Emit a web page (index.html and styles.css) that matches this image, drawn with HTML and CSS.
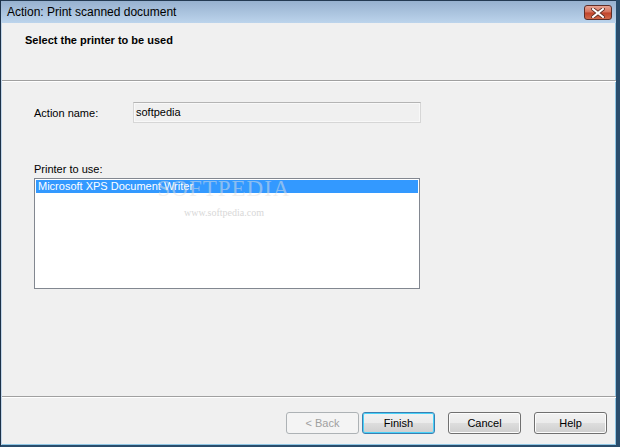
FILE: index.html
```html
<!DOCTYPE html>
<html lang="en">
<head>
  <meta charset="UTF-8">
  <title>Action: Print scanned document</title>
  <link rel="stylesheet" href="styles.css">
</head>
<body>
  <div class="window">
    <div class="titlebar">
      <span class="title">Action: Print scanned document</span>
      <button class="close" type="button" aria-label="Close">
        <svg width="14" height="10" viewBox="0 0 14 10">
          <path d="M2 1 L12 9 M12 1 L2 9" stroke="#5a2a22" stroke-width="3.6" stroke-linecap="square"/>
          <path d="M2 1 L12 9 M12 1 L2 9" stroke="#ffffff" stroke-width="2" stroke-linecap="square"/>
        </svg>
      </button>
    </div>

    <div class="header">
      <h1>Select the printer to be used</h1>
    </div>
    <div class="separator"></div>

    <div class="content">
      <div class="row">
        <label for="actionName">Action name:</label>
        <div class="textbox" id="actionName">softpedia</div>
      </div>

      <label class="list-label">Printer to use:</label>
      <div class="listbox">
        <div class="item selected">Microsoft XPS Document Writer</div>
        <div class="watermark">
          <span class="wm-big">SOFTPEDIA</span>
          <span class="wm-small">www.softpedia.com</span>
        </div>
      </div>
    </div>

    <div class="separator"></div>
    <div class="footer">
      <button class="btn" type="button" disabled>&lt; Back</button>
      <button class="btn focused" type="button">Finish</button>
      <button class="btn gap" type="button">Cancel</button>
      <button class="btn gap" type="button">Help</button>
    </div>
  </div>
</body>
</html>
```

FILE: styles.css
```css
body {
  margin: 0;
  padding: 0;
  background: #f0f0f0;
  font-family: 'Liberation Sans', Arial, sans-serif;
  font-size: 11px;
  color: #000;
}
.window {
  width: 620px;
  height: 447px;
  box-sizing: border-box;
  display: flex;
  flex-direction: column;
  background-color: #f0f0f0;
  border-left: 1px solid #1c3148;
  border-right: 4px solid #2a4d6c;
  border-bottom: 2px solid #2a4d6c;
  box-shadow: inset 1px 0 0 #c2d6ea, inset -1px 0 0 #8fc6e4, inset 0 -1px 0 #8fc6e4;
}
.titlebar {
  height: 23px;
  flex: none;
  box-sizing: border-box;
  border-top: 1px solid #243a52;
  background: linear-gradient(#97b1cf, #bcd4ec);
  display: flex;
  align-items: center;
  padding: 0 4px 0 6px;
}
.title {
  font-size: 12px;
  color: #000;
  flex: 1;
  margin-top: -1px;
}
.close {
  width: 28px;
  height: 15px;
  margin-top: 1px;
  padding: 0;
  border: 1px solid #5e2e28;
  border-radius: 3px;
  background: linear-gradient(#e8a493, #d4705a 48%, #c0422a 52%, #d06a4c);
  display: flex;
  align-items: center;
  justify-content: center;
}
.header {
  height: 57px;
  flex: none;
  padding: 0 0 0 24px;
}
h1 {
  font-size: 11px;
  font-weight: bold;
  margin: 0;
  padding-top: 11px;
}
.separator {
  height: 1px;
  flex: none;
  margin: 0 0 0 1px;
  background: #a0a0a0;
  border-bottom: 1px solid #ffffff;
}
.content {
  flex: 1;
  padding: 20px 0 0 33px;
}
.row {
  display: flex;
  align-items: center;
}
.row label {
  width: 99px;
}
.textbox {
  width: 282px;
  height: 19px;
  border: 1px solid #d6d6d6;
  border-top-color: #b4b4b4;
  box-shadow: inset 0 0 0 1px #f8f8f8;
  padding: 0 2px;
  line-height: 19px;
  background: #f0f0f0;
}
.list-label {
  display: block;
  margin-top: 40px;
  line-height: 13px;
}
.listbox {
  margin-top: 2px;
  width: 382px;
  height: 107px;
  border: 1px solid #828790;
  background: #fff;
  padding: 1px;
  position: relative;
}
.item {
  height: 13px;
  line-height: 13px;
  padding-left: 2px;
}
.item.selected {
  background: #3399ff;
  color: #fff;
}
.watermark {
  position: absolute;
  left: 127px;
  top: 0;
  width: 124px;
  display: flex;
  flex-direction: column;
  align-items: center;
  pointer-events: none;
}
.wm-big {
  font-family: 'Liberation Serif', serif;
  font-size: 23px;
  line-height: 20px;
  letter-spacing: 1px;
  color: rgba(225, 225, 225, 0.5);
}
.wm-small {
  font-family: 'Liberation Serif', serif;
  font-size: 10px;
  margin-top: 8px;
  color: #d8d8d8;
}
.footer {
  height: 47px;
  flex: none;
  box-sizing: border-box;
  display: flex;
  align-items: flex-start;
  padding: 14px 0 0 285px;
}
.btn {
  width: 73px;
  height: 22px;
  font-family: 'Liberation Sans', Arial, sans-serif;
  font-size: 11px;
  color: #000;
  border: 1px solid #707070;
  border-radius: 3px;
  background: linear-gradient(#f2f2f2, #ebebeb 48%, #dddddd 52%, #cfcfcf);
  padding: 0;
  margin-right: 3px;
  box-shadow: inset 0 0 0 1px #fcfcfc;
}
.btn:disabled {
  color: #a0a0a0;
  border-color: #adb2b5;
  background: #f4f4f4;
  box-shadow: none;
}
.btn.focused {
  border-color: #3c7fb1;
  box-shadow: inset 0 0 0 1px #48d2f9;
}
.btn.gap {
  margin-left: 10px;
}
```
